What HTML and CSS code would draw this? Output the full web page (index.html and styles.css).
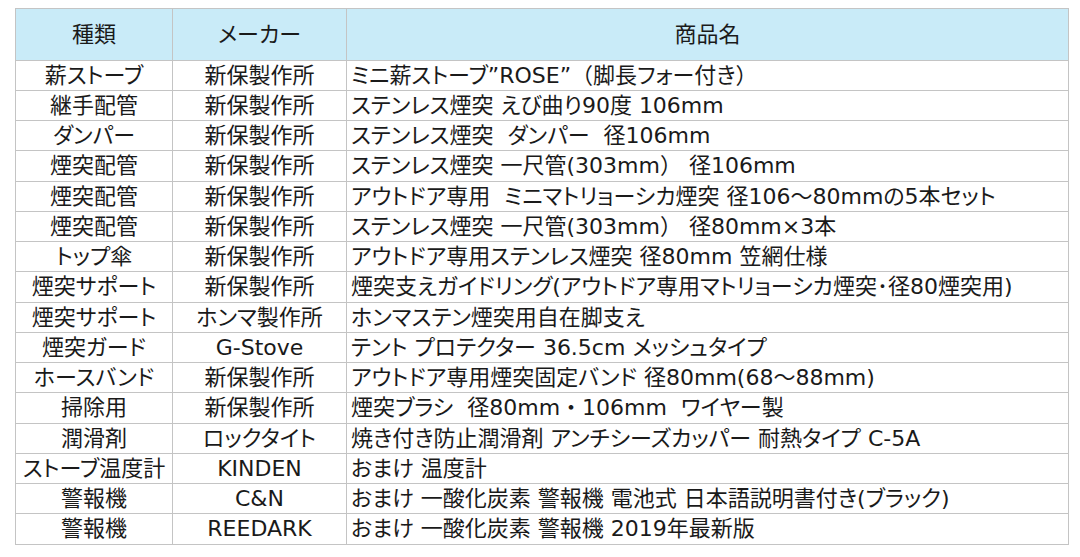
FILE: index.html
```html
<!DOCTYPE html>
<html lang="ja">
<head>
<meta charset="utf-8">
<link rel="stylesheet" href="styles.css">
</head>
<body>
<div class="page">
<table class="list">
<colgroup><col class="c1"><col class="c2"><col class="c3"></colgroup>
<thead>
<tr><th>種類</th><th>メーカー</th><th>商品名</th></tr>
</thead>
<tbody>
<tr><td>薪ストーブ</td><td>新保製作所</td><td class="name">ミニ薪ストーブ”ROSE”<span class="fw">（</span>脚長フォー付き<span class="fw">）</span></td></tr>
<tr><td>継手配管</td><td>新保製作所</td><td class="name">ステンレス煙突 えび曲り90度 106mm</td></tr>
<tr><td>ダンパー</td><td>新保製作所</td><td class="name">ステンレス煙突  ダンパー  径106mm</td></tr>
<tr><td>煙突配管</td><td>新保製作所</td><td class="name">ステンレス煙突 一尺管(303mm<span class="fw">）</span> 径106mm</td></tr>
<tr><td>煙突配管</td><td>新保製作所</td><td class="name">アウトドア専用  ミニマトリョーシカ煙突 径106～80mmの5本セット</td></tr>
<tr><td>煙突配管</td><td>新保製作所</td><td class="name">ステンレス煙突 一尺管(303mm<span class="fw">）</span> 径80mm×3本</td></tr>
<tr><td>トップ傘</td><td>新保製作所</td><td class="name">アウトドア専用ステンレス煙突 径80mm 笠網仕様</td></tr>
<tr><td>煙突サポート</td><td>新保製作所</td><td class="name">煙突支えガイドリング(アウトドア専用マトリョーシカ煙突･径80煙突用)</td></tr>
<tr><td>煙突サポート</td><td>ホンマ製作所</td><td class="name">ホンマステン煙突用自在脚支え</td></tr>
<tr><td>煙突ガード</td><td>G-Stove</td><td class="name">テント プロテクター 36.5cm メッシュタイプ</td></tr>
<tr><td>ホースバンド</td><td>新保製作所</td><td class="name">アウトドア専用煙突固定バンド 径80mm(68～88mm)</td></tr>
<tr><td>掃除用</td><td>新保製作所</td><td class="name">煙突ブラシ  径80mm<span class="fw">・</span>106mm  ワイヤー製</td></tr>
<tr><td>潤滑剤</td><td>ロックタイト</td><td class="name">焼き付き防止潤滑剤 アンチシーズカッパー 耐熱タイプ C-5A</td></tr>
<tr><td>ストーブ温度計</td><td>KINDEN</td><td class="name">おまけ 温度計</td></tr>
<tr><td>警報機</td><td>C&amp;N</td><td class="name">おまけ 一酸化炭素 警報機 電池式 日本語説明書付き(ブラック)</td></tr>
<tr><td>警報機</td><td>REEDARK</td><td class="name">おまけ 一酸化炭素 警報機 2019年最新版</td></tr>
</tbody>
</table>
<div class="rule"></div>
</div>
</body>
</html>
```

FILE: styles.css
```css
html, body {
  margin: 0;
  padding: 0;
  background: #ffffff;
}
.page {
  width: 1080px;
  height: 557px;
  overflow: hidden;
  padding-top: 8px;
  box-sizing: border-box;
  font-family: "DejaVu Sans", "Noto Sans CJK JP", sans-serif;
  color: #1a1a1a;
}
.list {
  margin-left: 15px;
  width: 1053px;
  border-collapse: collapse;
  table-layout: fixed;
  font-size: 22px;
  font-feature-settings: "palt" 1;
}
.c1 { width: 157px; }
.c2 { width: 174px; }
.c3 { width: 722px; }
.list th,
.list td {
  border: 1px solid #c4c4c4;
  padding: 0 2px;
  text-align: center;
  font-weight: normal;
  line-height: 28px;
  white-space: pre;
  overflow: hidden;
}
.list th {
  background: #c9ebf8;
  height: 52px;
  box-sizing: border-box;
}
.list td {
  height: 30px;
  box-sizing: border-box;
}
.list tbody tr:nth-child(4n) td {
  height: 31px;
}
.list td.name {
  text-align: left;
  padding-left: 4px;
}
.fw {
  font-feature-settings: normal;
}
.rule {
  margin-top: 14px;
  height: 1px;
  background: #a6a6a6;
}
```
